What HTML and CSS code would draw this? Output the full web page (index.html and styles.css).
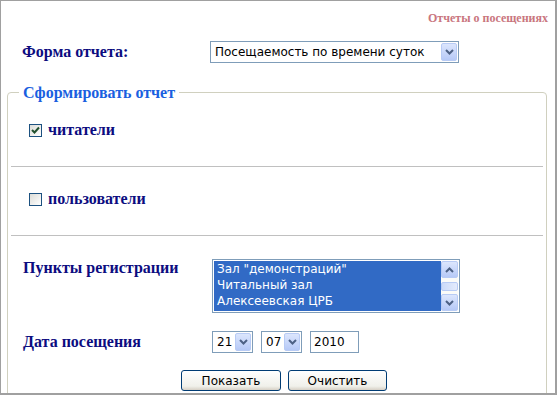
FILE: index.html
```html
<!DOCTYPE html>
<html lang="ru">
<head>
<meta charset="UTF-8" />
<title>Отчеты о посещениях</title>
<link rel="stylesheet" href="styles.css">
</head>
<body>
<div class="page">
<div class="title">Отчеты о посещениях</div>

<div class="form-row">
<span class="label">Форма отчета:</span>
<div class="combo wide">
<span class="combo-text">Посещаемость по времени суток</span>
<span class="drop"><svg width="9" height="6" viewBox="0 0 9 6"><path d="M1 1 L4.5 4.5 L8 1" fill="none" stroke="#4d6185" stroke-width="2"/></svg></span>
</div>
</div>

<fieldset class="report">
<legend>Сформировать отчет</legend>

<div class="check-row first">
<span class="check"><svg width="9" height="8" viewBox="0 0 9 8"><path d="M1 4 L3.5 6.5 L8 1.5" fill="none" stroke="#21502d" stroke-width="2"/></svg></span>
<span class="label">читатели</span>
</div>
<div class="divider"></div>

<div class="check-row second">
<span class="check"></span>
<span class="label">пользователи</span>
</div>
<div class="divider"></div>

<div class="field-row points">
<span class="label col">Пункты регистрации</span>
<div class="listbox">
<ul class="items">
<li>Зал "демонстраций"</li>
<li>Читальный зал</li>
<li>Алексеевская ЦРБ</li>
</ul>
<div class="scrollbar">
<span class="sbtn"><svg width="9" height="6" viewBox="0 0 9 6"><path d="M1 5 L4.5 1.5 L8 5" fill="none" stroke="#4d6185" stroke-width="2"/></svg></span>
<span class="track"><span class="thumb"></span></span>
<span class="sbtn"><svg width="9" height="6" viewBox="0 0 9 6"><path d="M1 1 L4.5 4.5 L8 1" fill="none" stroke="#4d6185" stroke-width="2"/></svg></span>
</div>
</div>
</div>

<div class="field-row date">
<span class="label col">Дата посещения</span>
<div class="combo small">
<span class="combo-text">21</span>
<span class="drop"><svg width="9" height="6" viewBox="0 0 9 6"><path d="M1 1 L4.5 4.5 L8 1" fill="none" stroke="#4d6185" stroke-width="2"/></svg></span>
</div>
<div class="combo small">
<span class="combo-text">07</span>
<span class="drop"><svg width="9" height="6" viewBox="0 0 9 6"><path d="M1 1 L4.5 4.5 L8 1" fill="none" stroke="#4d6185" stroke-width="2"/></svg></span>
</div>
<div class="year">2010</div>
</div>

<div class="buttons">
<button class="btn show">Показать</button>
<button class="btn clear">Очистить</button>
</div>
</fieldset>
</div>
</body>
</html>
```

FILE: styles.css
```css
* {
margin: 0;
padding: 0;
box-sizing: border-box;
}
body {
background: #fff;
font-family: "Liberation Serif", "Times New Roman", serif;
}
.page {
width: 557px;
height: 395px;
border: 1px solid #a0a0a0;
border-right-width: 2px;
border-bottom-width: 2px;
overflow: hidden;
}
.title {
padding: 10px 7px 0 0;
text-align: right;
font-size: 12px;
line-height: 14px;
font-weight: bold;
color: #c9767e;
}
.label {
font-size: 16px;
font-weight: bold;
color: #0c0c80;
}
.form-row {
display: flex;
align-items: center;
height: 22px;
margin-top: 16px;
padding-left: 21px;
}
.form-row .label {
width: 188px;
}
.combo {
display: flex;
align-items: center;
height: 22px;
border: 1px solid #7f9db9;
padding: 1px;
background: #fff;
font-family: "DejaVu Sans", Tahoma, sans-serif;
font-size: 12px;
color: #000;
}
.combo.wide {
width: 249px;
}
.combo.small {
width: 41px;
margin-right: 8px;
}
.combo-text {
flex: 1;
padding-left: 3px;
white-space: nowrap;
}
.drop, .sbtn {
display: flex;
align-items: center;
justify-content: center;
width: 16px;
height: 18px;
border: 1px solid #b8cbf5;
border-radius: 2px;
background: linear-gradient(#dce6fd, #b6c9f7);
}
fieldset.report {
margin: 21px 8px 0 6px;
padding: 0 3px;
height: 330px;
border: 1px solid #d0d0bf;
border-radius: 4px;
}
legend {
margin-left: 8px;
padding: 0 4px;
font-size: 16px;
line-height: 17px;
font-weight: bold;
color: #1a5fe0;
}
.check-row {
display: flex;
align-items: center;
height: 16px;
padding-left: 18px;
}
.check-row.first {
margin: 21px 0 28px;
}
.check-row.second {
margin: 24px 0 28px;
}
.check {
display: flex;
align-items: center;
justify-content: center;
width: 13px;
height: 13px;
margin-right: 6px;
border: 1px solid #1c5180;
background: linear-gradient(135deg, #dcdcd7, #fff);
}
.divider {
border-top: 1px solid #c0c0c0;
}
.field-row {
display: flex;
align-items: flex-start;
}
.field-row .col {
width: 201px;
padding-left: 12px;
}
.field-row.points {
margin-top: 23px;
}
.field-row.date {
margin-top: 18px;
align-items: center;
}
.listbox {
display: flex;
width: 248px;
height: 54px;
border: 1px solid #7f9db9;
padding: 1px;
}
.items {
flex: 1;
list-style: none;
background: #316ac5;
color: #fff;
font-family: "DejaVu Sans", Tahoma, sans-serif;
font-size: 12px;
line-height: 16px;
padding-left: 3px;
}
.scrollbar {
display: flex;
flex-direction: column;
width: 17px;
background: #fbfbf8;
}
.scrollbar .sbtn {
width: 17px;
height: 17px;
}
.track {
flex: 1;
display: flex;
align-items: center;
}
.thumb {
width: 17px;
height: 9px;
border: 1px solid #b8cbf5;
border-radius: 2px;
background: linear-gradient(90deg, #cbdaf9, #e4ebfc);
}
.year {
width: 49px;
height: 22px;
padding: 2px 3px;
border: 1px solid #7f9db9;
font-family: "DejaVu Sans", Tahoma, sans-serif;
font-size: 12px;
line-height: 16px;
}
.buttons {
display: flex;
gap: 7px;
margin-top: 17px;
padding-left: 170px;
}
.btn {
height: 21px;
border: 1px solid #003c74;
border-radius: 3px;
background: linear-gradient(#fff, #f0f0ea 80%, #d6d0c5);
font-family: "DejaVu Sans", Tahoma, sans-serif;
font-size: 12px;
color: #000;
}
.btn.show {
width: 100px;
}
.btn.clear {
width: 99px;
}
```
